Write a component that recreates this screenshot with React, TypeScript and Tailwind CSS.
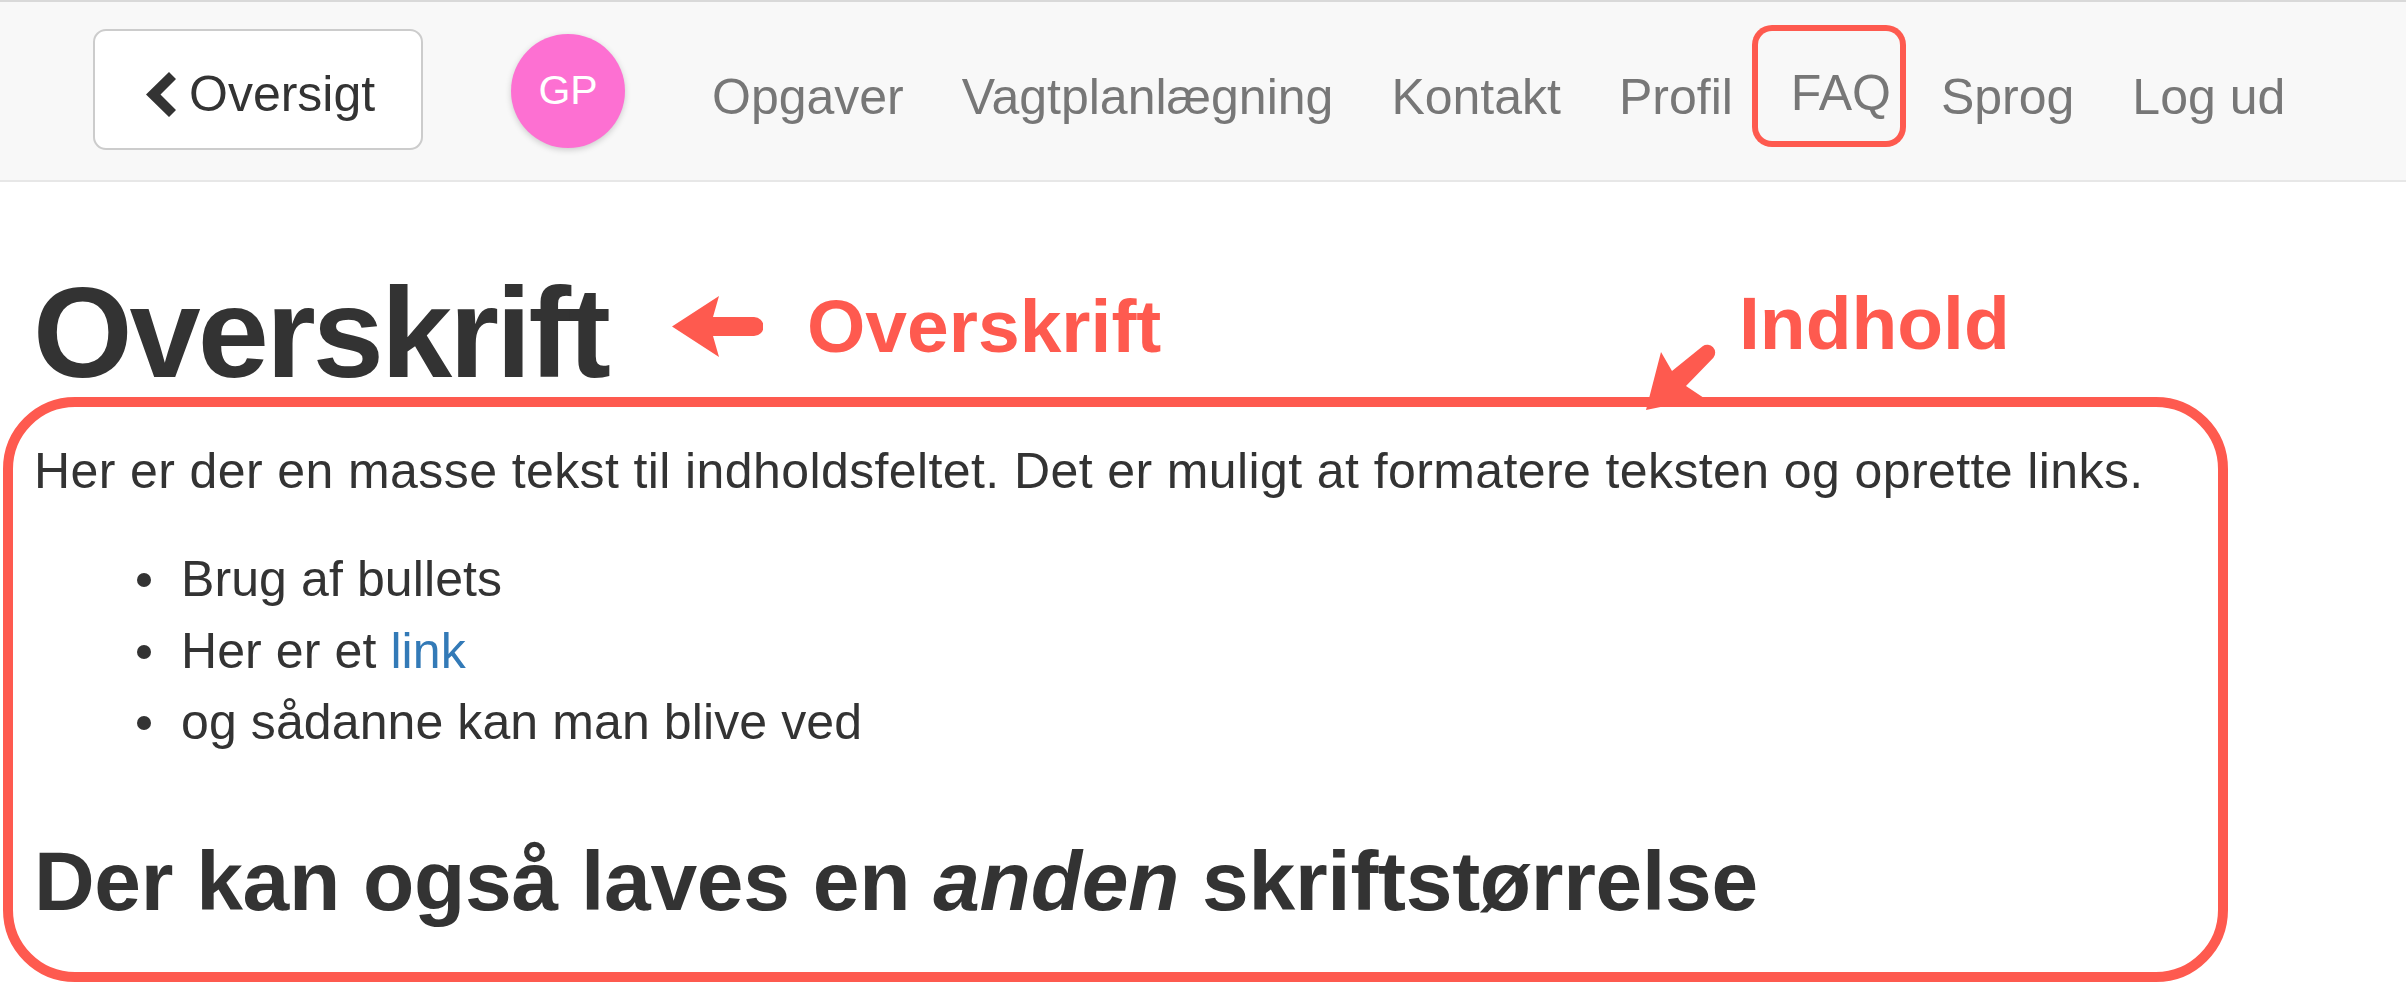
const navItems = ['Opgaver', 'Vagtplanlægning', 'Kontakt', 'Profil', 'FAQ', 'Sprog', 'Log ud']

const ChevronLeft = () => (
  <svg viewBox="0 0 30 45" className="h-[45px] w-[30px] shrink-0 fill-[#333]">
    <polygon points="30,7 23,0 0,22.5 23,45 30,38 14.5,22.5" />
  </svg>
)

const Header = () => {
  return (
    <header className="flex h-[182px] items-center border-t-2 border-b-2 border-t-[#d9d9d9] border-b-[#e7e7e7] bg-[#f8f8f8] pl-[93px]">
      <button className="mb-[3px] flex h-[121px] w-[330px] items-center gap-[13px] rounded-[13px] border-2 border-[#cccccc] bg-white pl-[51px] pt-[10px] text-[50px] text-[#333]">
        <ChevronLeft />
        <span>Oversigt</span>
      </button>

      <div className="ml-[88px] flex size-[114px] items-center justify-center rounded-full bg-[#fd70d2] text-[41px] text-white shadow-[0_2px_6px_rgba(0,0,0,0.18)]">
        GP
      </div>

      <ul className="ml-[58px] flex items-center">
        {navItems.map((item) =>
          item === 'FAQ' ? (
            <li key={item} className="flex items-center pl-[29px] pr-[21px] pt-[12px] text-[50px] text-[#777]">
              <span className="-ml-[33px] -mr-[9px] mb-[22px] flex h-[110px] items-center rounded-[14px] pl-[33px] pr-[9px] pt-[14px] ring-[6px] ring-[#fe5a4f]">
                {item}
              </span>
            </li>
          ) : (
            <li key={item} className="flex items-center px-[29px] pt-[12px] text-[50px] text-[#777]">
              <span>{item}</span>
            </li>
          )
        )}
      </ul>
    </header>
  )
}

const App = () => {
  return (
    <div className="relative min-h-screen w-full bg-white font-['Liberation_Sans',Arial,sans-serif] text-[#333]">
      <Header />

      <main className="px-[3px] pt-[87px]">
        <div className="flex h-[128px] items-start pl-[30px]">
          <h1 className="w-[639px] shrink-0 text-[128px] font-bold leading-none tracking-[-3px]">
            Overskrift
          </h1>
          <svg viewBox="0 0 91 61" className="mt-[27px] h-[61px] w-[91px] shrink-0 fill-[#fe5a4f]">
            <path d="M0 30.5 L47 0 L41 21 L82 21 A9.5 9.5 0 0 1 82 40 L41 40 L47 61 Z" />
          </svg>
          <span className="ml-[44px] mt-[20px] w-[932px] shrink-0 text-[75px] font-bold leading-none text-[#fe5a4f]">
            Overskrift
          </span>
          <span className="mt-[17px] text-[75px] font-bold leading-none text-[#fe5a4f]">
            Indhold
          </span>
        </div>

        <section className="w-[2225px] rounded-[72px] border-[10px] border-[#fe5a4f] pb-[45px] pl-[21px] pt-[29px]">
          <p className="mb-[37px] text-[50px] leading-[1.42857] tracking-[0.4px]">
            Her er der en masse tekst til indholdsfeltet. Det er muligt at formatere teksten og oprette links.
          </p>
          <ul className="text-[50px] leading-[1.42857] tracking-[0.1px]">
            <li className="flex items-center">
              <span className="ml-[103px] mr-[30px] size-[14px] rounded-full bg-[#333]" />
              Brug af bullets
            </li>
            <li className="flex items-center">
              <span className="ml-[103px] mr-[30px] size-[14px] rounded-full bg-[#333]" />
              <span>
                Her er et <a className="text-[#337ab7]">link</a>
              </span>
            </li>
            <li className="flex items-center">
              <span className="ml-[103px] mr-[30px] size-[14px] rounded-full bg-[#333]" />
              og sådanne kan man blive ved
            </li>
          </ul>
          <h3 className="mt-[76px] text-[84px] font-bold leading-[1.1] tracking-[-0.3px]">
            Der kan også laves en <em>anden</em> skriftstørrelse
          </h3>
        </section>
      </main>

      {/* annotation arrow pointing at the content box */}
      <svg viewBox="0 0 100 90" className="absolute left-[1630px] top-[340px] h-[90px] w-[100px] fill-[#fe5a4f]">
        <path d="M16 70 L31 12 L42 31 L72.6 6.2 A8 8 0 0 1 83.4 17.8 L56 46 L74 58 Z" />
      </svg>
    </div>
  )
}

export default App
